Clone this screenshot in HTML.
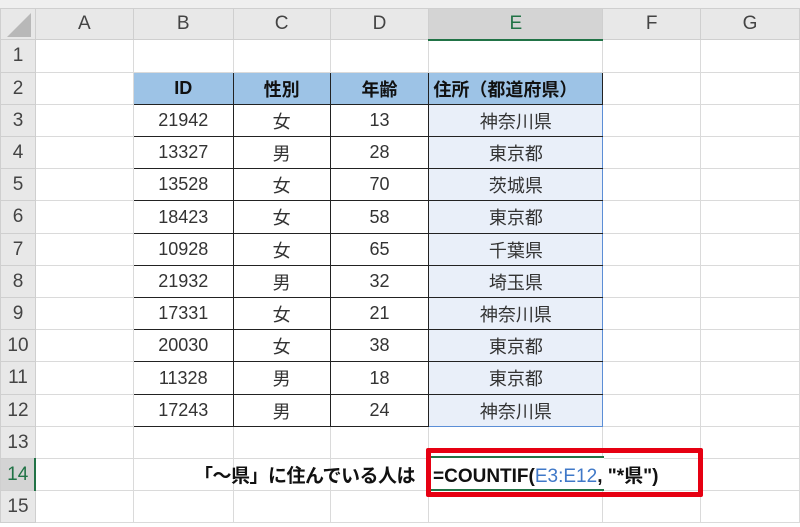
<!DOCTYPE html>
<html><head><meta charset="utf-8"><style>
*{margin:0;padding:0;box-sizing:border-box}
body{width:800px;height:527px;overflow:hidden;background:#fff;font-family:"Liberation Sans","Noto Sans CJK JP",sans-serif;position:relative}
.top{position:absolute;left:0;top:0;width:800px;height:8px;background:#efefef}
table{position:absolute;left:0;top:8px;border-collapse:collapse;table-layout:fixed}
td{border:1px solid #dadada;text-align:center;font-size:18px;color:#333;padding:0;overflow:visible;white-space:nowrap}
tr.h td{background:#e8e8e8;color:#444;font-size:19px;border-color:#cfcfcf}
td.rh{background:#e8e8e8;color:#444;font-size:19px;border-color:#cfcfcf}
td.t{border:1px solid #222}
td.hd{background:#9dc3e6;font-weight:bold;color:#111;border:1px solid #222;font-size:18px}
td.e{background:#e9eff9;border-left:1px solid #5b8ed6;border-right:1px solid #5b8ed6;border-top:1px solid #222;border-bottom:1px solid #222}
.corner{position:absolute;left:7px;top:13px;width:0;height:0;border-left:24px solid transparent;border-bottom:24px solid #b8b8b8}
</style></head><body>
<div class="top"></div>
<table>
<colgroup><col style="width:35px"><col style="width:98px"><col style="width:100px"><col style="width:97px"><col style="width:99px"><col style="width:174px"><col style="width:98px"><col style="width:99px"></colgroup>
<tr class="h" style="height:31px"><td></td><td>A</td><td>B</td><td>C</td><td>D</td><td style="background:#d4d4d4;color:#217346;border-bottom:2px solid #217346">E</td><td>F</td><td>G</td></tr>
<tr style="height:33px"><td class="rh">1</td><td></td><td></td><td></td><td></td><td></td><td></td><td></td></tr>
<tr style="height:32px"><td class="rh">2</td><td></td><td class="hd">ID</td><td class="hd">性別</td><td class="hd">年齢</td><td class="hd" style="text-align:left;padding-left:4px">住所（都道府県）</td><td></td><td></td></tr>
<tr style="height:32px"><td class="rh">3</td><td></td><td class="t">21942</td><td class="t">女</td><td class="t">13</td><td class="e">神奈川県</td><td></td><td></td></tr>
<tr style="height:32px"><td class="rh">4</td><td></td><td class="t">13327</td><td class="t">男</td><td class="t">28</td><td class="e">東京都</td><td></td><td></td></tr>
<tr style="height:32px"><td class="rh">5</td><td></td><td class="t">13528</td><td class="t">女</td><td class="t">70</td><td class="e">茨城県</td><td></td><td></td></tr>
<tr style="height:33px"><td class="rh">6</td><td></td><td class="t">18423</td><td class="t">女</td><td class="t">58</td><td class="e">東京都</td><td></td><td></td></tr>
<tr style="height:32px"><td class="rh">7</td><td></td><td class="t">10928</td><td class="t">女</td><td class="t">65</td><td class="e">千葉県</td><td></td><td></td></tr>
<tr style="height:32px"><td class="rh">8</td><td></td><td class="t">21932</td><td class="t">男</td><td class="t">32</td><td class="e">埼玉県</td><td></td><td></td></tr>
<tr style="height:32px"><td class="rh">9</td><td></td><td class="t">17331</td><td class="t">女</td><td class="t">21</td><td class="e">神奈川県</td><td></td><td></td></tr>
<tr style="height:32px"><td class="rh">10</td><td></td><td class="t">20030</td><td class="t">女</td><td class="t">38</td><td class="e">東京都</td><td></td><td></td></tr>
<tr style="height:33px"><td class="rh">11</td><td></td><td class="t">11328</td><td class="t">男</td><td class="t">18</td><td class="e">東京都</td><td></td><td></td></tr>
<tr style="height:32px"><td class="rh">12</td><td></td><td class="t">17243</td><td class="t">男</td><td class="t">24</td><td class="e" style="border-bottom:1px solid #5b8ed6">神奈川県</td><td></td><td></td></tr>
<tr style="height:32px"><td class="rh">13</td><td></td><td></td><td></td><td></td><td></td><td></td><td></td></tr>
<tr style="height:32px"><td class="rh" style="background:#d4d4d4;color:#217346;border-right:2px solid #217346">14</td><td></td><td></td><td></td><td></td><td></td><td></td><td></td></tr>
<tr style="height:32px"><td class="rh">15</td><td></td><td></td><td></td><td></td><td></td><td></td><td></td></tr>
</table>
<div class="corner"></div>
<div style="position:absolute;left:194px;top:461px;font-size:19px;font-weight:bold;color:#111;white-space:nowrap;letter-spacing:-0.5px">「～県」に住んでいる人は</div>
<div style="position:absolute;left:430px;top:456px;width:174px;height:35px;border-top:2px solid #217346;border-bottom:2px solid #217346;background:#fff"></div>
<div style="position:absolute;left:433px;top:461px;font-size:19px;font-weight:bold;color:#111;white-space:nowrap">=COUNTIF(<span style="color:#3f78c8;font-weight:normal">E3:E12</span>, "*県")</div>
<div style="position:absolute;left:426px;top:448px;width:277px;height:49px;border:5px solid #e60012;border-radius:2px"></div>
</body></html>
